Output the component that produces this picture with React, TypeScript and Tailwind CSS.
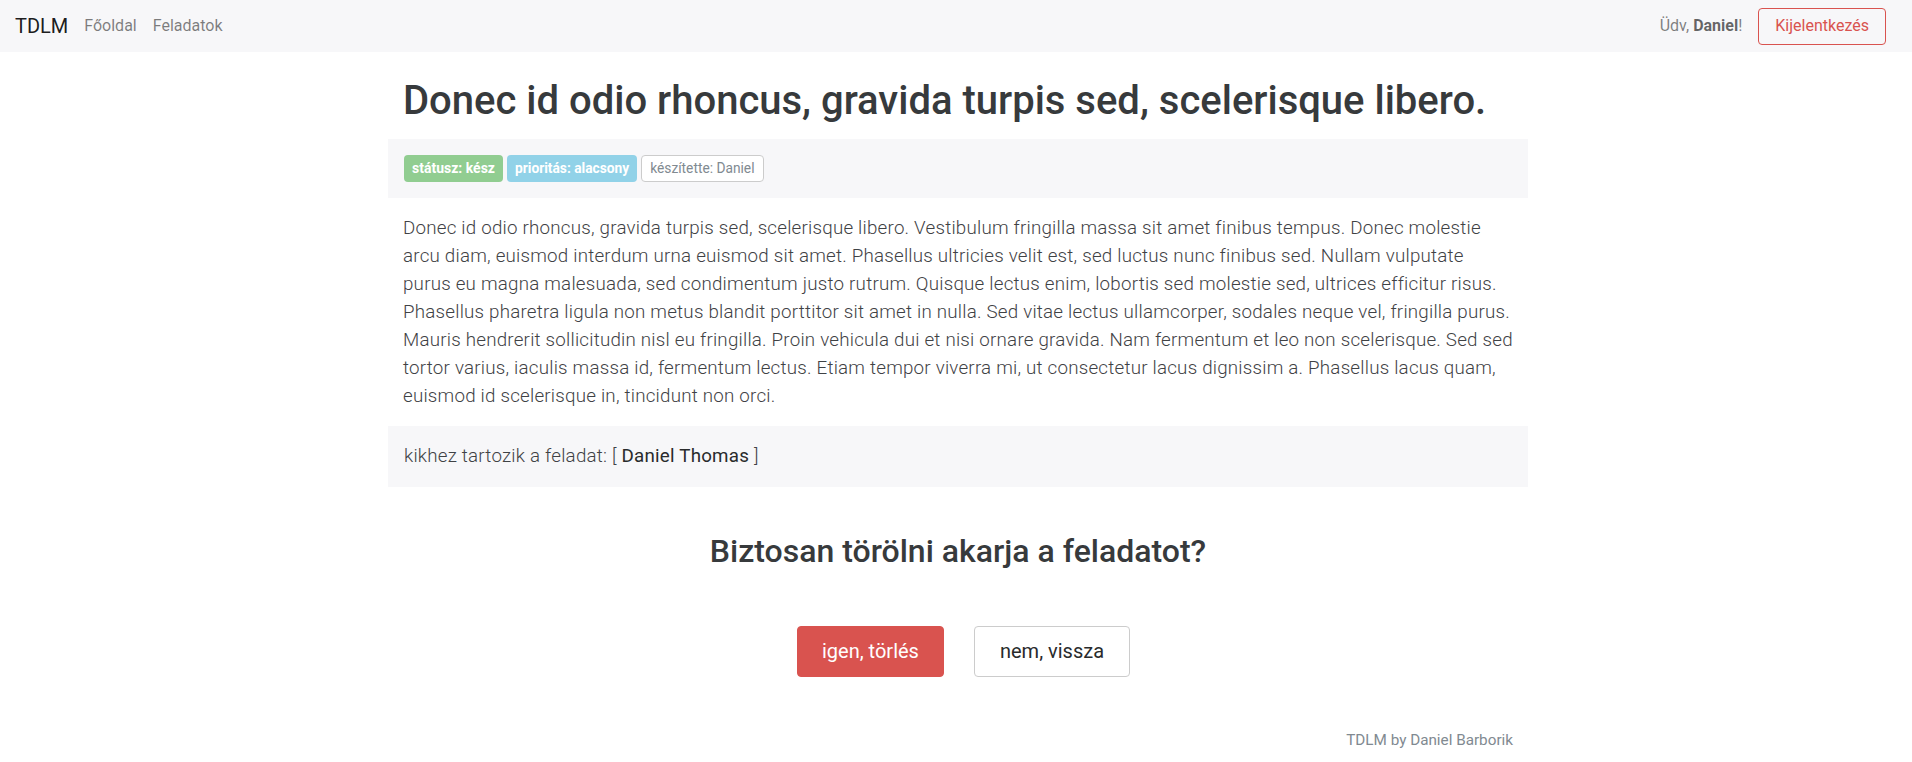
export default function App() {
  return (
    <div className="min-h-screen bg-white text-[#373a3c] font-['Roboto',sans-serif]">
      {/* Navbar */}
      <nav className="h-[52px] bg-[#f7f7f9] flex items-center justify-between pl-[15px] pr-[26px]">
        <div className="flex items-center">
          <span className="text-[20px] text-black/90 mr-[8px]">TDLM</span>
          <a className="text-[16px] text-black/50 px-[8px]">Főoldal</a>
          <a className="text-[16px] text-black/50 px-[8px]">Feladatok</a>
        </div>
        <div className="flex items-center gap-[16px]">
          <span className="text-[16px] text-black/50">
            Üdv, <b className="font-bold text-black/60">Daniel</b>!
          </span>
          <button className="h-[37px] px-[16px] rounded-[4px] border border-[#d9534f] text-[16px] text-[#d9534f] bg-transparent">
            Kijelentkezés
          </button>
        </div>
      </nav>

      <div className="pl-[4px]">
        <main className="w-[1140px] mx-auto">
          <h1 className="mt-[27px] px-[15px] text-[40px] leading-[44px] font-medium text-[#373a3c]">
            Donec id odio rhoncus, gravida turpis sed, scelerisque libero.
          </h1>

          {/* Badges */}
          <div className="mt-[16px] bg-[#f7f7f9] py-[16px] px-[16px] flex gap-[4px]">
            <span className="h-[27px] flex items-center px-[8px] rounded-[4px] bg-[#91cd91] text-white text-[14px] font-bold">
              státusz: kész
            </span>
            <span className="h-[27px] flex items-center px-[8px] rounded-[4px] bg-[#91d2e8] text-white text-[13.75px] font-bold">
              prioritás: alacsony
            </span>
            <span className="h-[27px] flex items-center px-[8px] rounded-[4px] bg-white border border-[#cccccc] text-[#818a91] text-[13.75px]">
              készítette: Daniel
            </span>
          </div>

          <p className="mt-[15.5px] px-[15px] text-[18.75px] leading-[28.125px] tracking-[0.22px] font-light text-[#3f4245]">
            Donec id odio rhoncus, gravida turpis sed, scelerisque libero. Vestibulum fringilla massa sit amet finibus tempus. Donec molestie arcu diam, euismod interdum urna euismod sit amet. Phasellus ultricies velit est, sed luctus nunc finibus sed. Nullam vulputate purus eu magna malesuada, sed condimentum justo rutrum. Quisque lectus enim, lobortis sed molestie sed, ultrices efficitur risus. Phasellus pharetra ligula non metus blandit porttitor sit amet in nulla. Sed vitae lectus ullamcorper, sodales neque vel, fringilla purus. Mauris hendrerit sollicitudin nisl eu fringilla. Proin vehicula dui et nisi ornare gravida. Nam fermentum et leo non scelerisque. Sed sed tortor varius, iaculis massa id, fermentum lectus. Etiam tempor viverra mi, ut consectetur lacus dignissim a. Phasellus lacus quam, euismod id scelerisque in, tincidunt non orci.
          </p>

          {/* Assignee */}
          <div className="mt-[16px] bg-[#f7f7f9] py-[16px] px-[16px] text-[18.75px] leading-[28.125px] tracking-[0.22px] font-light text-[#3f4245]">
            kikhez tartozik a feladat: [ <span className="font-normal text-[#292b2c]">Daniel Thomas</span> ]
          </div>

          <h2 className="mt-[47px] text-center text-[32px] leading-[35px] font-medium text-[#373a3c]">
            Biztosan törölni akarja a feladatot?
          </h2>

          <div className="mt-[57px] flex justify-center gap-[30px] pl-[11px]">
            <button className="h-[51px] px-[24px] rounded-[4px] bg-[#d9534f] border border-[#d9534f] text-white text-[20px]">
              igen, törlés
            </button>
            <button className="h-[51px] px-[25px] rounded-[4px] bg-white border border-[#cccccc] text-[#292b2c] text-[20px]">
              nem, vissza
            </button>
          </div>

          <footer className="mt-[51px] px-[15px] text-right text-[15.25px] leading-[24px] text-[#818a91]">
            TDLM by Daniel Barborik
          </footer>
        </main>
      </div>
    </div>
  );
}
